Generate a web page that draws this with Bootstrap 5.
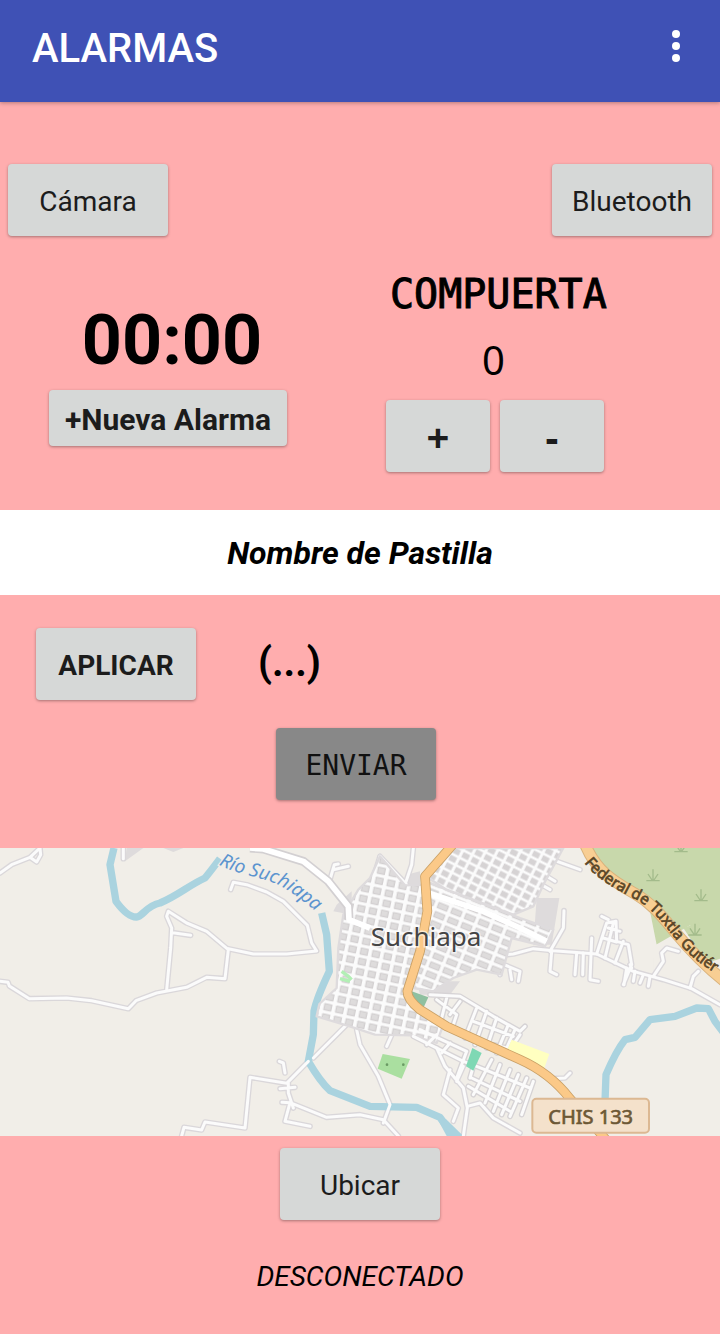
<!DOCTYPE html>
<html lang="es">
<head>
<meta charset="utf-8">
<meta name="viewport" content="width=device-width, initial-scale=1">
<title>Alarmas</title>
<link href="https://cdn.jsdelivr.net/npm/bootstrap@5.3.0/dist/css/bootstrap.min.css" rel="stylesheet">
<style>
  body { background: #ffadae; color: #000; font-family: Roboto, sans-serif; }
  .app-bar { background: #3f51b5; height: 102px; box-shadow: 0 1px 4px rgba(0,0,0,.3); padding: 0 32px 6px; }
  .app-title { font-size: 40px; font-weight: 500; line-height: 48px; padding-top: 2px; }
  .menu-btn { width: 24px; height: 48px; }
  .key { background: #d6d8d7; color: #1c1c1c; border: 0; border-radius: 4px; min-width: 160px; height: 72px; padding: 4px 16px 0; font-size: 28px; line-height: 32px; box-shadow: 0 1px 3px rgba(0,0,0,.35); }
  .key:hover { background: #c8cac9; color: #1c1c1c; }
  .key-short { height: 56px; font-size: 30px; font-weight: 700; }
  .key-step { min-width: 104px; padding-top: 2px; font: 700 40px/40px "Noto Sans", sans-serif; }
  .key-send { background: #888; color: #111; font-family: "DejaVu Sans Mono", monospace; }
  .key-send:hover { background: #7b7b7b; }
  .top-actions { padding: 62px 8px 0; }
  .controls { padding: 32px 0 38px; }
  .clock { font-size: 70px; font-weight: 700; line-height: 80px; margin: 32px 0 10px; padding-left: 8px; }
  .gate { margin-left: 26px; }
  .gate-title { font: 400 40px/52px "DejaVu Sans Mono", monospace; -webkit-text-stroke: 1px #000; margin: 0; padding-left: 4px; }
  .gate-value { font: 400 40px/56px "Noto Sans", sans-serif; margin: 12px 0; padding-right: 6px; }
  .gate-keys { gap: 10px; }
  .pill-name { background: #fff; font-size: 32px; font-weight: 700; line-height: 37px; padding: 25px 0 23px; margin: 0; }
  .send-area { padding: 33px 36px 48px; }
  .pill-value { font-size: 40px; font-weight: 700; line-height: 70px; margin-left: 62px; }
  .map { height: 288px; background: #f1eee8; }
  .status { font-size: 28px; line-height: 32px; margin: 41px 0 39px; }
  .map-text { font-family: "Noto Sans", sans-serif; }
</style>
</head>
<body>
<header class="app-bar d-flex align-items-center justify-content-between text-white position-relative">
  <h1 class="app-title m-0">ALARMAS</h1>
  <button type="button" class="menu-btn btn p-0 border-0 d-flex" aria-label="Más opciones">
    <svg width="24" height="48" viewBox="0 0 24 48" fill="#fff"><circle cx="12" cy="10" r="4"/><circle cx="12" cy="22" r="4"/><circle cx="12" cy="34" r="4"/></svg>
  </button>
</header>

<main>
  <div class="top-actions d-flex justify-content-between">
    <button type="button" class="key btn">Cámara</button>
    <button type="button" class="key btn">Bluetooth</button>
  </div>

  <div class="controls row g-0">
    <section class="col-6 d-flex flex-column align-items-center pe-4">
      <div class="clock">00:00</div>
      <button type="button" class="key key-short btn">+Nueva Alarma</button>
    </section>
    <section class="col-6">
      <div class="gate d-inline-flex flex-column align-items-start">
        <h2 class="gate-title">COMPUERTA</h2>
        <output class="gate-value align-self-center">0</output>
        <div class="gate-keys d-flex">
          <button type="button" class="key key-step btn">+</button>
          <button type="button" class="key key-step btn">-</button>
        </div>
      </div>
    </section>
  </div>

  <h2 class="pill-name text-center fst-italic">Nombre de Pastilla</h2>

  <section class="send-area">
    <div class="d-flex">
      <button type="button" class="key btn fw-bold">APLICAR</button>
      <div class="pill-value">(...)</div>
    </div>
    <div class="text-center mt-4 pt-1 pe-2">
      <button type="button" class="key key-send btn">ENVIAR</button>
    </div>
  </section>

  <svg class="map d-block w-100" viewBox="0 0 2160 864" preserveAspectRatio="xMidYMid slice" role="img" aria-label="Mapa de Suchiapa">
    <defs>
      <pattern id="west" width="36" height="31" patternUnits="userSpaceOnUse" patternTransform="rotate(12)">
        <rect width="36" height="31" fill="#fbfbfb"/><rect x="5" y="4" width="25" height="22" rx="2" fill="#d3d0d1"/><rect x="9" y="8" width="17" height="14" fill="#dedcdc"/>
      </pattern>
      <pattern id="east" width="44" height="29" patternUnits="userSpaceOnUse" patternTransform="rotate(22)">
        <rect width="44" height="29" fill="#fbfbfb"/><rect x="5" y="4" width="34" height="20" rx="2" fill="#d3d0d1"/><rect x="9" y="8" width="26" height="12" fill="#dedcdc"/>
      </pattern>
      <pattern id="north" width="31" height="25" patternUnits="userSpaceOnUse" patternTransform="rotate(27)">
        <rect width="31" height="25" fill="#fbfbfb"/><rect x="5" y="4" width="22" height="17" fill="#d6d3d4"/>
      </pattern>
      <g id="shrub" fill="none" stroke="#a3bb8b" stroke-width="4"><path d="M-20 16H20M0 16V-18M-3 14L-15 -4M3 14L15 -4"/></g>
      <path id="river-label" d="M656 50C720 85 800 85 860 125S935 180 1010 245"/>
      <path id="road-label" d="M1753 44C1786 89 1846 124 1901 151S1986 224 2026 272S2106 364 2260 434"/>

      <g id="lanes" fill="none" stroke-linejoin="round" stroke-linecap="round">
        <path d="M0 75L35 50L90 28L120 0M90 28L110 42L122 20L120 0"/>
        <path d="M370 32V0"/>
        <path d="M0 400L24 403L28 414L88 452L200 450L275 458L385 482L408 458L470 435L560 418L620 388L675 392L685 305L620 250L560 225L505 190L500 205L515 240L512 300L500 425M518 254L572 262"/>
        <path d="M685 302L760 318L860 318L950 309L935 285L922 232L850 160L800 132L740 110L700 103L692 125"/>
        <path d="M545 864L552 838L605 846L615 822L735 840L750 688L860 706L925 640M865 705V735L880 780M840 722L885 718M855 675L850 645L838 640M846 763L870 764L855 820L930 835M870 764L980 808L1080 800L1150 815L1195 864"/>
        <path d="M940 630L1040 530M1070 545L1080 590L1135 685L1170 770L1150 825M1180 550L1160 595"/>
        <path d="M987 105L1003 50L1015 48M1000 65L1045 55M988 103L975 90"/>
        <path d="M1140 25L1120 90M1140 25L1220 110M1240 0L1235 50L1215 110"/>
        <path d="M1310 600L1335 655L1390 720L1402 780L1390 864M1350 665L1330 740L1375 780L1360 820M1402 775L1440 765L1480 810L1560 855M1390 655L1370 700"/>
        <path d="M1420 330L1540 318L1600 302L1660 308L1790 318L1900 370L1990 395L2075 422L2160 470"/>
        <path d="M1650 310L1690 240L1692 188M1655 310L1650 370L1670 380M1730 315L1725 380M1750 315L1748 380M1775 270L1770 395L1795 400M1790 318L1820 225L1848 220L1850 280L1885 290L1895 350L1870 410M1805 205L1825 215M1825 240L1860 250M1810 270L1850 282M1840 225L1815 330M1870 280L1845 345M1890 350L1895 360M1880 360L1872 410M1905 370L1900 400M1930 380L1920 405M1950 385L1945 415"/>
        <path d="M1960 385L1990 340L1985 315L2000 300L2035 310M2070 420L2080 385L2095 370M1655 692L1695 690L1710 675"/>
        <path d="M1490 335L1500 380M1500 345L1560 370L1555 400M1530 365L1535 395M1560 560L1540 590"/>
        <path d="M1560 0L1740 65M1600 60L1665 100M1590 90L1650 125"/>
      </g>
      <g id="suburb" fill="none" stroke-linejoin="round" stroke-linecap="round">
        <path d="M1290 440L1380 445L1480 505L1560 550L1575 535M1310 455L1370 500L1355 545M1430 480L1395 570M1460 490L1425 590M1490 510L1460 600M1525 530L1490 615M1545 545L1520 600M1340 450L1320 530M1420 520L1540 565M1380 460L1350 500M1400 570L1520 600"/>
        <path d="M1240 565L1390 640L1430 655M1260 545L1400 610M1310 560L1280 590M1350 585L1325 615M1400 610L1370 690M1430 620L1410 690M1475 635L1420 740M1500 650L1455 765M1530 665L1480 790M1555 680L1505 800M1580 690L1530 805M1600 700L1565 800M1430 655L1590 720M1415 690L1560 760M1405 715L1530 790"/>
      </g>
    </defs>

    <path fill="#dedbdc" d="M380 0H430L375 40ZM490 0H550L520 12ZM1610 150H1678L1655 290L1600 290ZM1010 170L1055 130L1055 200L1000 190ZM1250 400L1380 400L1350 440L1260 440ZM1220 80L1260 70V120L1220 110Z"/>
    <path fill="#c8d8ab" d="M1775 0H2160V332L2070 280L1970 290L1950 190L1850 110Z"/>
    <path fill="#f1eee8" d="M1960 295L2070 232L2160 330V400H1960Z"/>
    <path fill="#c8d8ab" d="M2050 240L2160 200V332L2120 345Z"/>
    <use href="#shrub" x="2043" y="-5"/><use href="#shrub" x="1959" y="82"/><use href="#shrub" x="2103" y="142"/><use href="#shrub" x="2085" y="245"/>

    <use href="#lanes" stroke="#dad7da" stroke-width="17"/>
    <use href="#suburb" stroke="#d6d3d5" stroke-width="17"/>
    <path fill="none" stroke="#aad3df" stroke-width="22" stroke-linejoin="round" d="M342 0L330 50L348 160C370 190 392 208 410 207S440 172 480 165C530 145 570 110 615 90Q630 72 660 32M965 195L980 260L988 370Q950 450 942 490L940 560L925 640Q960 700 990 728L1110 775L1250 778L1320 808L1360 864M1815 760L1818 680C1835 640 1855 600 1875 575L1905 568L1950 515L2025 505L2090 480L2125 482L2145 520L2175 560"/>
    <path fill="#aad3df" d="M1300 790L1340 815L1390 864H1340Z"/>
    <use href="#lanes" stroke="#fbfbfb" stroke-width="9"/>

    <g stroke="#dedbdd" stroke-width="7" stroke-linejoin="round">
      <path fill="url(#west)" d="M1140 25L1215 112L1275 110L1282 200L1250 330L1225 440L1250 490L1330 530L1310 585L1235 562L1125 560L1040 532L950 505L958 468L1010 420L1015 300L1030 200L1075 125L1110 90Z"/>
      <path fill="url(#east)" d="M1278 100L1340 125L1560 210L1660 245L1635 295L1535 270L1505 380L1430 365L1360 390L1300 430L1240 420L1265 330L1290 200Z"/>
      <path fill="url(#north)" d="M1285 90L1365 0H1690L1630 110L1600 175L1540 200L1340 125Z"/>
    </g>
    <use href="#suburb" stroke="#fbfbfb" stroke-width="9"/>
    <g fill="none" stroke="#fff" stroke-linejoin="round">
      <path stroke="#d3d0d2" stroke-width="27" d="M750 0L790 3L910 40L985 100L1045 175L1047 215"/>
      <path stroke-width="17" d="M750 0L790 3L910 40L985 100L1045 175L1047 215L1110 240M1285 135L1450 190L1560 240L1640 280"/>
    </g>

    <path fill="#8fc0a0" d="M1235 430L1285 448L1270 480L1235 465Z"/>
    <path fill="#aadfa0" d="M1148 618L1230 633L1205 692L1133 662Z"/><circle cx="1161" cy="650" r="4" fill="#6a9a63"/><circle cx="1210" cy="650" r="4" fill="#6a9a63"/>
    <path fill="#7fd8b4" d="M1417 600L1445 615L1420 668L1398 655Z"/>
    <path fill="#ffffc0" d="M1535 575L1648 618L1630 668L1515 620Z"/>
    <path fill="none" stroke="#b2efb5" stroke-width="10" d="M1025 370L1045 385L1055 395M1020 392L1050 400"/>

    <g fill="none" stroke-linejoin="round">
      <path stroke="#c9a066" stroke-width="29" d="M1360 -12L1275 85L1282 190L1260 310L1222 430Q1222 455 1260 485L1340 535L1560 635Q1650 675 1710 752L1840 900"/>
      <path stroke="#fbc988" stroke-width="24" d="M1360 -12L1275 85L1282 190L1260 310L1222 430Q1222 455 1260 485L1340 535L1560 635Q1650 675 1710 752L1840 900"/>
      <path stroke="#d9b27c" stroke-width="36" d="M1755 -12C1790 75 1850 105 1905 137S1990 210 2030 258S2110 350 2180 405"/>
      <path stroke="#f8ce93" stroke-width="30" d="M1755 -12C1790 75 1850 105 1905 137S1990 210 2030 258S2110 350 2180 405"/>
    </g>

    <g class="map-text">
      <text font-size="78" x="1112" y="294" fill="#444" stroke="#fff" stroke-opacity=".6" stroke-width="9" paint-order="stroke">Suchiapa</text>
      <text font-size="57" font-style="italic" fill="#5c94cf" stroke="#f1eee8" stroke-width="8" paint-order="stroke"><textPath href="#river-label">Río Suchiapa</textPath></text>
      <text font-size="46" fill="#5a4627" stroke="#5a4627" stroke-width="2"><textPath href="#road-label">Federal de Tuxtla Gutiér</textPath></text>
      <rect x="1597" y="752" width="350" height="102" rx="12" fill="#f4e1cb" stroke="#dcb892" stroke-width="6"/>
      <text font-size="60" x="1772" y="827" text-anchor="middle" fill="#6d5835" stroke="#6d5835" stroke-width="2">CHIS 133</text>
    </g>
  </svg>

  <section class="text-center pt-2">
    <button type="button" class="key btn mt-1">Ubicar</button>
    <p class="status fst-italic">DESCONECTADO</p>
  </section>
</main>
<script src="https://cdn.jsdelivr.net/npm/bootstrap@5.3.0/dist/js/bootstrap.bundle.min.js"></script>
</body>
</html>
